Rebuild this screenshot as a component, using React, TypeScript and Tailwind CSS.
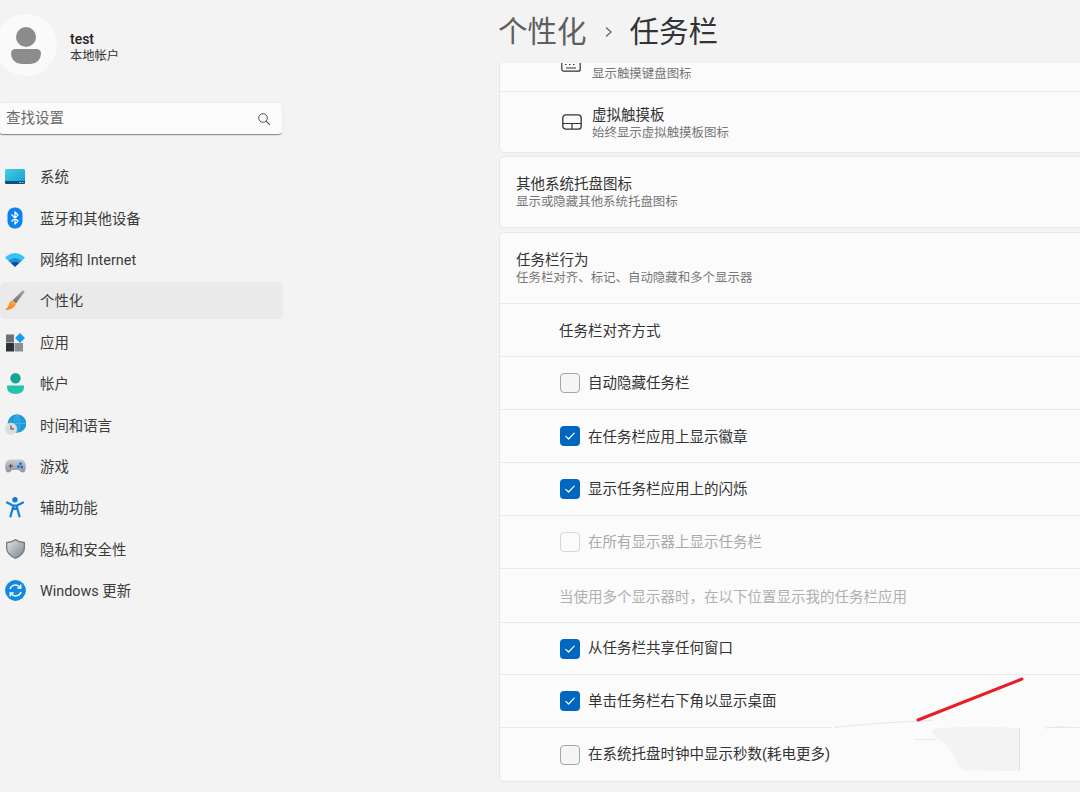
import React from "react";

const Check = () => (
  <span className="flex h-5 w-5 shrink-0 items-center justify-center rounded-[4px] bg-[#0067c0]">
    <svg width="12" height="12" viewBox="0 0 12 12" fill="none">
      <path d="M1.8 6.4 L4.6 9 L10.2 3.2" stroke="#ffffff" strokeWidth="1.2" strokeLinecap="round" strokeLinejoin="round" />
    </svg>
  </span>
);
const Empty = ({ disabled }: { disabled?: boolean }) => (
  <span className={disabled ? "h-5 w-5 shrink-0 rounded-[4px] border border-[#d6d6d6] bg-[#fbfbfb]" : "h-5 w-5 shrink-0 rounded-[4px] border border-[#a6a6a6] bg-[#f5f5f5]"} />
);

const SystemIcon = () => (
  <svg width="20" height="16" viewBox="0 0 20 16">
    <defs><linearGradient id="sys" x1="0" y1="0" x2="1" y2="1"><stop offset="0" stopColor="#3fd0e4" /><stop offset="1" stopColor="#1a9ad0" /></linearGradient></defs>
    <rect x="0" y="0" width="20" height="15" rx="1.5" fill="url(#sys)" />
    <path d="M0 12h20v1.5a1.5 1.5 0 0 1-1.5 1.5h-17A1.5 1.5 0 0 1 0 13.500z" fill="#0f4f7c" />
    <rect x="14" y="13" width="2" height="1" fill="#9fd0e8" />
    <rect x="17" y="13" width="1.500" height="1" fill="#9fd0e8" />
  </svg>
);
const BluetoothIcon = () => (
  <svg width="16" height="22" viewBox="0 0 16 22">
    <rect x="0.500" y="0.500" width="15" height="21" rx="7" fill="#0a84f0" />
    <path d="M4.500 7.500 L11 14 L8 17 V5 L11 8 L4.500 14.500" fill="none" stroke="#ffffff" strokeWidth="1.300" strokeLinejoin="round" />
  </svg>
);
const WifiIcon = () => (
  <svg width="20" height="15" viewBox="0 0 20 15">
    <path d="M0 5.500 Q10 -3.500 20 5.500 L17 8.500 Q10 3 3 8.500z" fill="#34c3f4" />
    <path d="M3 8.500 Q10 3 17 8.500 L14.300 11 Q10 7.500 5.700 11z" fill="#1193dd" />
    <path d="M5.700 11 Q10 7.500 14.300 11 L10 15z" fill="#0b4f9c" />
  </svg>
);
const BrushIcon = () => (
  <svg width="20" height="21" viewBox="0 0 20 21">
    <defs>
      <linearGradient id="bh" x1="0" y1="1" x2="1" y2="0"><stop offset="0" stopColor="#6b6b6b" /><stop offset="1" stopColor="#a8a8a8" /></linearGradient>
      <linearGradient id="bb" x1="0" y1="1" x2="1" y2="0"><stop offset="0" stopColor="#f47a12" /><stop offset="1" stopColor="#fbb34a" /></linearGradient>
    </defs>
    <path d="M7.500 10.500 L17.500 0.500 Q19.500 0 19.500 2 L11 13.500z" fill="url(#bh)" />
    <path d="M7.300 10.300 L11.200 13.700 Q9.500 19.500 0.300 20 Q4 16 4 14 Q4.500 11 7.300 10.300z" fill="url(#bb)" />
  </svg>
);
const AppsIcon = () => (
  <svg width="19" height="19" viewBox="0 0 19 19">
    <rect x="0" y="1.500" width="8" height="8" fill="#6d7078" />
    <rect x="0" y="10" width="8" height="8.500" rx="0.500" fill="#2f3036" />
    <rect x="8.500" y="10" width="8.500" height="8.500" fill="#8c8f96" />
    <path d="M14 0 L19 5 L14 10 L9 5z" fill="#1b9bf0" />
  </svg>
);
const UserIcon = () => (
  <svg width="17" height="21" viewBox="0 0 17 21">
    <circle cx="8.500" cy="5.200" r="5.200" fill="#17a593" />
    <path d="M0 12.500 H17 V14 Q17 21 8.500 21 Q0 21 0 14z" fill="#24c4a8" />
  </svg>
);
const TimeIcon = () => (
  <svg width="21" height="21" viewBox="0 0 21 21">
    <circle cx="12" cy="9.500" r="9.300" fill="#1d9ad8" />
    <path d="M12 0.200 V18.800 M2.800 9.500 H21 M12 0.200 Q6 9.500 12 18.800 M12 0.200 Q18 9.500 12 18.800" stroke="#4cc0ea" strokeWidth="0.700" fill="none" />
    <circle cx="6" cy="14.800" r="6" fill="#dcdcdc" />
    <path d="M6 11.500 V15 H9" stroke="#444444" strokeWidth="1.100" fill="none" />
  </svg>
);
const GameIcon = () => (
  <svg width="21" height="14" viewBox="0 0 21 14">
    <defs><linearGradient id="gm" x1="0" y1="0" x2="0" y2="1"><stop offset="0" stopColor="#c9ccd2" /><stop offset="1" stopColor="#8f939b" /></linearGradient></defs>
    <path d="M5 0.500 H16 Q20.500 1 20.800 7 Q21 13 18 13.500 Q15.500 13.500 14 11 H7 Q5.500 13.500 3 13.500 Q0 13 0.200 7 Q0.500 1 5 0.500z" fill="url(#gm)" />
    <path d="M3.500 7 H8 M5.700 4.800 V9.200" stroke="#3c3f45" strokeWidth="0.900" />
    <circle cx="15.500" cy="4.700" r="1.400" fill="#1572d0" />
    <circle cx="13.500" cy="7.700" r="1.400" fill="#1572d0" />
    <circle cx="16.800" cy="8" r="1.400" fill="#1572d0" />
  </svg>
);
const A11yIcon = () => (
  <svg width="18" height="21" viewBox="0 0 18 21">
    <circle cx="9" cy="2.700" r="2.700" fill="#1478d4" />
    <path d="M1 5.500 L7 8.500 H11 L17 5.500 M7.500 8.500 L4.500 19.500 M10.500 8.500 L13.500 19.500 M7.500 8.500 V12 H10.500 V8.500" fill="none" stroke="#1280dc" strokeWidth="2.200" strokeLinecap="round" strokeLinejoin="round" />
  </svg>
);
const ShieldIcon = () => (
  <svg width="19" height="20" viewBox="0 0 19 20">
    <defs><linearGradient id="sh" x1="0" y1="0" x2="1" y2="1"><stop offset="0" stopColor="#dfe2e6" /><stop offset="1" stopColor="#7f858d" /></linearGradient></defs>
    <path d="M9.500 0 Q14 3 19 3 V9 Q19 16 9.500 20 Q0 16 0 9 V3 Q5 3 9.500 0z" fill="#767b82" />
    <path d="M9.500 1.500 Q14 4 17.700 4.200 V9 Q17.700 15 9.500 18.500 Q1.300 15 1.300 9 V4.200 Q5 4 9.500 1.500z" fill="url(#sh)" />
  </svg>
);
const UpdateIcon = () => (
  <svg width="21" height="21" viewBox="0 0 21 21">
    <circle cx="10.500" cy="10.500" r="10.400" fill="#0f8ae0" />
    <path d="M5 9 A5.700 5.700 0 0 1 15 7.300 M16 12 A5.700 5.700 0 0 1 6 13.700" fill="none" stroke="#ffffff" strokeWidth="1.400" />
    <path d="M15.800 4.500 V8 H12.300 M5.200 16.500 V13 H8.700" fill="none" stroke="#ffffff" strokeWidth="1.400" />
  </svg>
);

const nav: { label: string; icon: React.ReactNode; active?: boolean }[] = [
  { label: "系统", icon: <SystemIcon /> },
  { label: "蓝牙和其他设备", icon: <BluetoothIcon /> },
  { label: "网络和 Internet", icon: <WifiIcon /> },
  { label: "个性化", icon: <BrushIcon />, active: true },
  { label: "应用", icon: <AppsIcon /> },
  { label: "帐户", icon: <UserIcon /> },
  { label: "时间和语言", icon: <TimeIcon /> },
  { label: "游戏", icon: <GameIcon /> },
  { label: "辅助功能", icon: <A11yIcon /> },
  { label: "隐私和安全性", icon: <ShieldIcon /> },
  { label: "Windows 更新", icon: <UpdateIcon /> },
];

const Row = ({ children, h = "h-[53px]", last }: { children: React.ReactNode; h?: string; last?: boolean }) => (
  <div className={`flex items-center gap-2 pl-[60px] text-[14.5px] ${h} ${last ? "" : "border-b border-[#ebebeb]"}`}>{children}</div>
);

export default function App() {
  return (
    <div className="relative flex h-[792px] w-[1080px] overflow-hidden bg-[#f3f3f3] text-[#333333] font-['Roboto','Noto_Sans_CJK_SC',sans-serif]">
      <aside className="w-[499px] shrink-0">
        <div className="w-[283px]">
          <div className="mt-[14px] flex h-[62px] items-center gap-[13px] -ml-[5px]">
            <div className="flex h-[62px] w-[62px] flex-col items-center justify-center gap-[2px] rounded-full bg-[#fafafa]">
              <span className="h-[20px] w-[20px] rounded-full bg-[#8c8c8c]" />
              <span className="h-[15px] w-[30px] rounded-t-[6px] rounded-b-[14px] bg-[#8c8c8c]" />
            </div>
            <div className="flex flex-col pt-[4px]">
              <span className="text-[14px] leading-[17px] font-medium text-[#1f1f1f]">test</span>
              <span className="text-[12.25px] leading-[16px] text-[#333333]">本地帐户</span>
            </div>
          </div>
          <div className="mt-[26px] -ml-[2px] flex h-[33px] w-[285px] items-center justify-between rounded-[5px] border border-[#ececec] border-b-[#8f8f8f] bg-[#fbfbfb] pl-[7px] pr-[11px] shadow-[0_1px_1px_rgba(0,0,0,0.08)]">
            <span className="pt-[1px] text-[14.5px] text-[#6a6a6a]">查找设置</span>
            <svg width="14" height="14" viewBox="0 0 14 14" fill="none">
              <circle cx="6" cy="6" r="4.300" stroke="#555555" strokeWidth="1" />
              <path d="M9.200 9.200 L12.800 12.800" stroke="#555555" strokeWidth="1.100" />
            </svg>
          </div>
          <nav className="mt-[23px] flex flex-col gap-[4.4px]">
            {nav.map((n) => (
              <div key={n.label} className={`flex h-[37px] items-center rounded-[5px] text-[14.4px] text-[#3c3c3c] ${n.active ? "bg-[#eaeaea]" : ""}`}>
                <span className="ml-[4px] flex w-[22px] justify-center">{n.icon}</span>
                <span className="ml-[14px] pt-[3px]">{n.label}</span>
              </div>
            ))}
          </nav>
        </div>
      </aside>

      <main className="flex w-[640px] shrink-0 flex-col">
        <header className="flex h-[63px] shrink-0 items-center">
          <span className="-ml-px pt-[2px] text-[29.5px] leading-none text-[#5f5f5f]">个性化</span>
          <svg className="ml-[17px] mr-[17px]" width="9" height="12" viewBox="0 0 9 12" fill="none">
            <path d="M2 1.500 L7 6 L2 10.500" stroke="#5f5f5f" strokeWidth="1.200" />
          </svg>
          <span className="pt-[2px] text-[29.5px] leading-none text-[#333333]">任务栏</span>
        </header>
        <div className="min-h-0 flex-1 overflow-hidden">
          <div className="-mt-[24px] flex flex-col">
            <section className="rounded-[5px] border border-[#e8e8e8] bg-[#fbfbfb]">
              <div className="flex h-[52px] items-end gap-[11px] border-b border-[#ebebeb] pb-[10px] pl-[61px]">
                <svg className="-translate-y-[9px]" width="20" height="16" viewBox="0 0 20 16" fill="none">
                  <rect x="0.800" y="0.800" width="18.400" height="14.400" rx="2" stroke="#333333" strokeWidth="1.200" />
                  <path d="M4 5h1.500M8 5h1.500M12 5h1.500M4 8.500h1.500M8 8.500h1.500M12 8.500h1.500M5 12h10" stroke="#333333" strokeWidth="1" />
                </svg>
                <span className="text-[12.45px] leading-[15px] text-[#767676]">显示触摸键盘图标</span>
              </div>
              <div className="flex h-[60px] items-center gap-[10px] pl-[62px]">
                <svg width="20" height="16" viewBox="0 0 20 16" fill="none">
                  <rect x="0.800" y="0.800" width="18.400" height="14.400" rx="3" stroke="#333333" strokeWidth="1.300" />
                  <path d="M1 9.500H19M10 9.500V15" stroke="#333333" strokeWidth="1.200" />
                </svg>
                <div className="flex flex-col pt-[2px]">
                  <span className="text-[14.5px] leading-[18px]">虚拟触摸板</span>
                  <span className="text-[12.45px] leading-[15px] text-[#767676]">始终显示虚拟触摸板图标</span>
                </div>
              </div>
            </section>
            <section className="mt-[3px] flex h-[72px] flex-col justify-center rounded-[5px] border border-[#e8e8e8] bg-[#fbfbfb] pl-[16px]">
              <span className="text-[14.5px] leading-[18px]">其他系统托盘图标</span>
              <span className="text-[12.45px] leading-[15px] text-[#767676]">显示或隐藏其他系统托盘图标</span>
            </section>
            <section className="mt-[4px] rounded-[5px] border border-[#e8e8e8] bg-[#fbfbfb]">
              <div className="flex h-[71px] flex-col justify-center border-b border-[#ebebeb] pl-[16px]">
                <span className="text-[14.5px] leading-[18px]">任务栏行为</span>
                <span className="text-[12.45px] leading-[15px] text-[#767676]">任务栏对齐、标记、自动隐藏和多个显示器</span>
              </div>
              <Row><span className="-ml-px pt-[4px]">任务栏对齐方式</span></Row>
              <Row><Empty /><span className="pt-[2px]">自动隐藏任务栏</span></Row>
              <Row><Check /><span className="pt-[3px]">在任务栏应用上显示徽章</span></Row>
              <Row><Check /><span className="pt-[2px]">显示任务栏应用上的闪烁</span></Row>
              <Row><Empty disabled /><span className="pt-[2px] text-[#aaaaaa]">在所有显示器上显示任务栏</span></Row>
              <Row h="h-[54px]"><span className="-ml-px pt-[4px] text-[#b0b0b0]">当使用多个显示器时，在以下位置显示我的任务栏应用</span></Row>
              <Row h="h-[52px]"><Check /><span className="pt-[1px]">从任务栏共享任何窗口</span></Row>
              <Row><Check /><span className="pt-[2px]">单击任务栏右下角以显示桌面</span></Row>
              <Row last><Empty /><span className="pt-[1px]">在系统托盘时钟中显示秒数(耗电更多)</span></Row>
            </section>
          </div>
        </div>
      </main>

      <svg className="absolute left-[820px] top-[660px]" width="260" height="132" viewBox="0 0 260 132" fill="none">
        <path d="M12 62 H120 V66 H232 V72 H12z" fill="#fbfbfb" />
        <path d="M14 67.500 Q50 63 112 60.500" stroke="#e6e6e6" strokeWidth="1" />
        <path d="M225 68 Q235 67.500 245 66.500" stroke="#e6e6e6" strokeWidth="1" />
        <path d="M94 79.500 H116" stroke="#eaeaea" strokeWidth="1" />
        <path d="M112 69 Q150 65 199 68 V111 Q165 111 143 110 Q136 104 133 95 Q130 85 118 80 Q112 74 112 69z" fill="#f3f3f3" />
        <path d="M199.500 68 V111" stroke="#e4e4e4" strokeWidth="1" />
        <path d="M98 60 L202 19" stroke="#ea1c24" strokeWidth="3" strokeLinecap="round" />
      </svg>
    </div>
  );
}
